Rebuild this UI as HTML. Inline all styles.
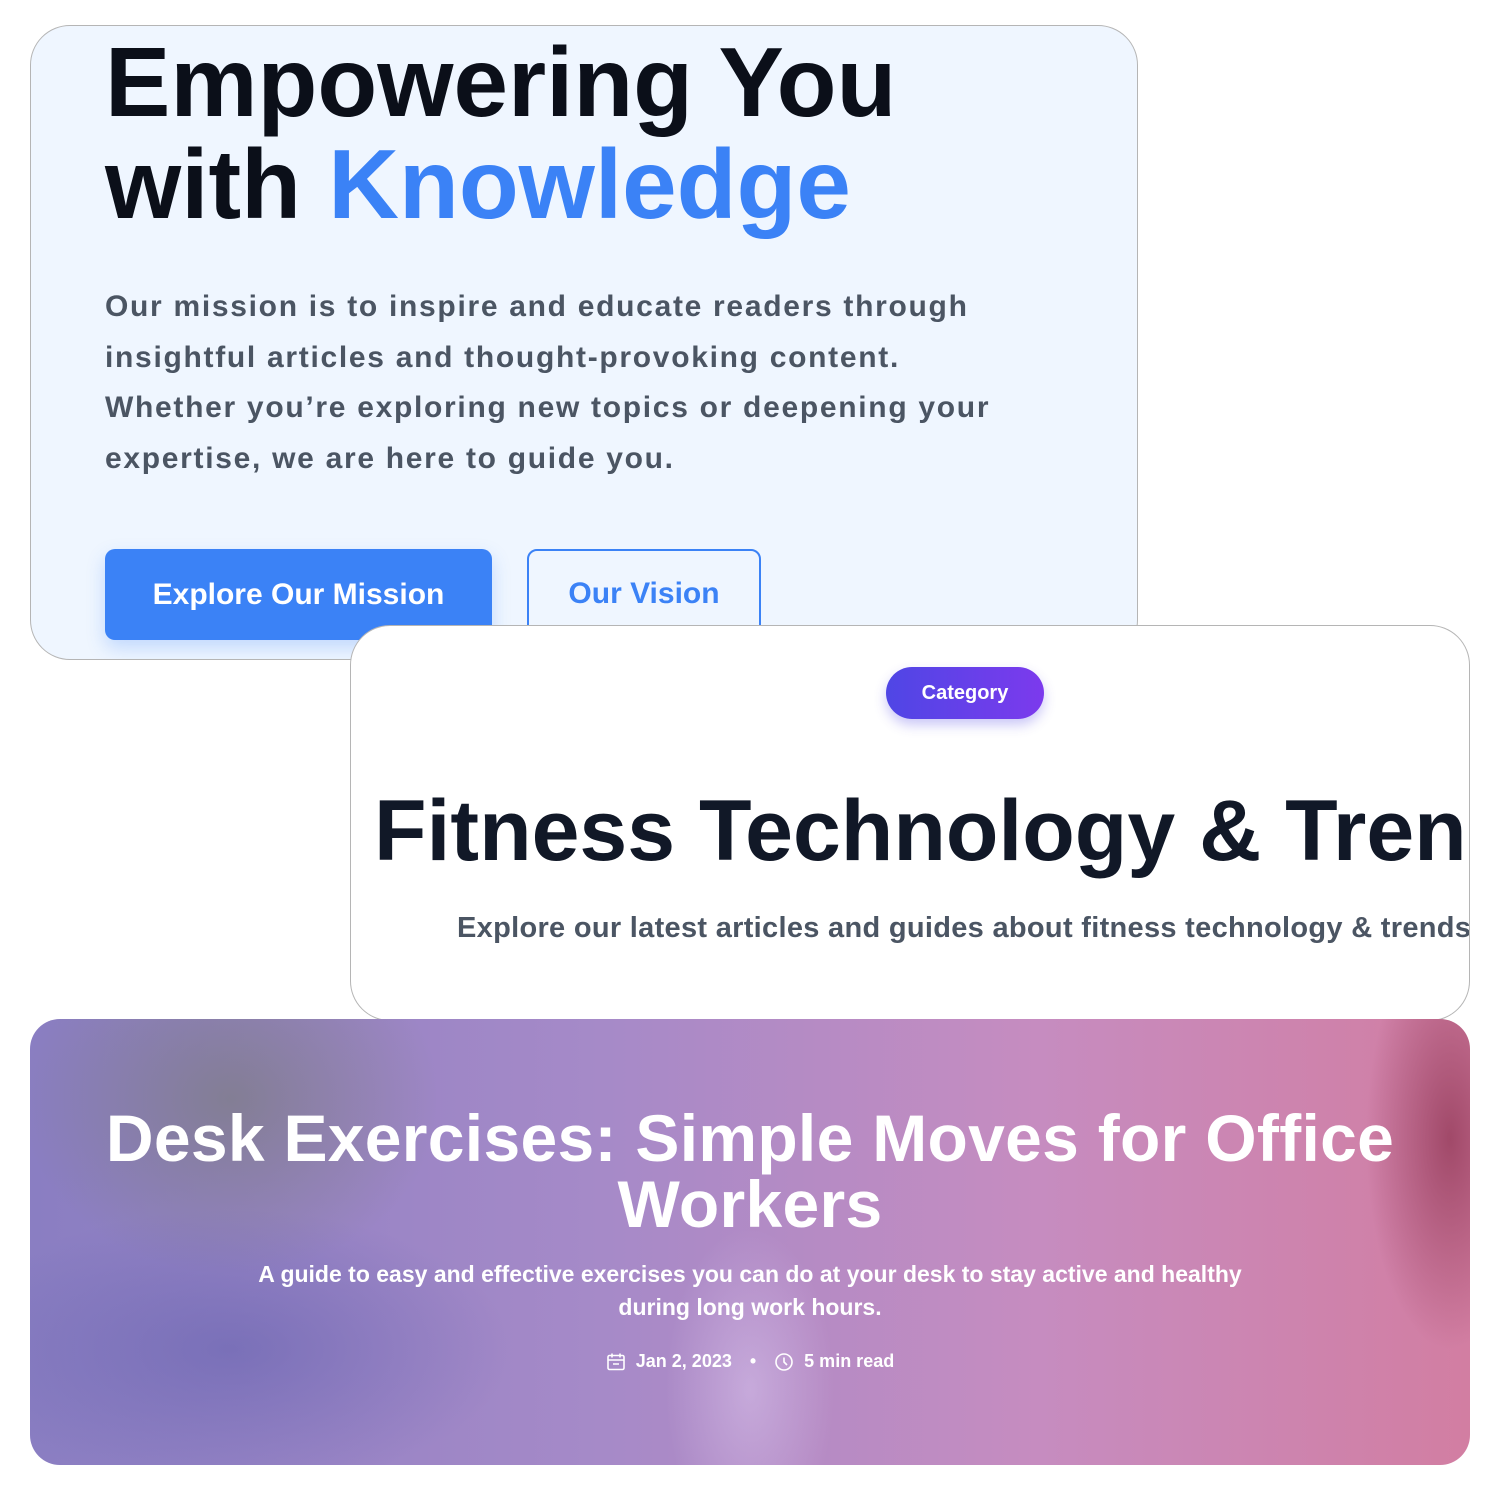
<!DOCTYPE html>
<html><head><meta charset="utf-8"><style>
*{margin:0;padding:0;box-sizing:border-box}
body{width:1500px;height:1500px;background:#fff;position:relative;overflow:hidden;font-family:"Liberation Sans",sans-serif}
.c1{position:absolute;left:30px;top:25px;width:1108px;height:635px;background:#eff6ff;border:1.5px solid #b5b5b5;border-radius:40px;overflow:hidden}
.h1{position:absolute;left:74px;top:5px;font-size:98px;font-weight:700;line-height:102px;color:#0b0f19;letter-spacing:0}
.h1 span{color:#3b82f6}
.p1{position:absolute;left:74px;top:256px;width:1000px;font-size:30px;font-weight:700;line-height:50.5px;color:#4b5563;white-space:nowrap;letter-spacing:1.7px}
.b1{position:absolute;left:74px;top:523px;width:387px;height:91px;background:#3b82f6;border-radius:10px;color:#fff;font-size:30px;font-weight:700;text-align:center;line-height:91px;box-shadow:0 8px 18px rgba(59,130,246,.25)}
.b2{position:absolute;left:496px;top:523px;width:234px;height:91px;border:2.5px solid #3b82f6;border-radius:10px;color:#3b82f6;font-size:30px;font-weight:700;text-align:center;line-height:86px}
.c2{position:absolute;left:350px;top:625px;width:1120px;height:396px;background:#fff;border:1.5px solid #b5b5b5;border-radius:40px;overflow:hidden}
.pill{position:absolute;left:535px;top:41px;width:158px;height:52px;border-radius:26px;background:linear-gradient(90deg,#4f46e5,#7c3aed);color:#fff;font-size:20px;font-weight:700;text-align:center;line-height:52px;box-shadow:0 6px 12px rgba(79,70,229,.3)}
.h2{position:absolute;left:23px;top:150px;font-size:86px;font-weight:700;color:#111827;white-space:nowrap;line-height:110px}
.p2{position:absolute;left:106px;top:286px;font-size:29px;font-weight:700;color:#4b5563;white-space:nowrap;letter-spacing:.3px}
.c3{position:absolute;left:30px;top:1019px;width:1440px;height:446px;border-radius:30px;overflow:hidden;
background:
radial-gradient(ellipse 300px 250px at 200px 80px,rgba(110,120,90,.45),transparent 70%),
radial-gradient(ellipse 120px 300px at 1420px 120px,rgba(140,50,80,.7),transparent 70%),
radial-gradient(ellipse 400px 200px at 200px 330px,rgba(90,90,170,.45),transparent 70%),
radial-gradient(ellipse 120px 230px at 720px 370px,rgba(220,200,240,.5),transparent 70%),
linear-gradient(90deg,#8a7ec2 0%,#a68ac8 40%,#c68cc0 70%,#d27ea2 100%)}
.h3{position:absolute;left:0;width:1440px;top:86px;text-align:center;color:#fff;font-size:66px;font-weight:700;line-height:66px;letter-spacing:.3px}
.p3{position:absolute;left:100px;width:1240px;top:239px;text-align:center;color:#fff;font-size:23px;font-weight:700;line-height:33px}
.meta{position:absolute;left:0;width:1440px;top:332px;text-align:center;color:#fff;font-size:18px;font-weight:700;display:flex;justify-content:center;align-items:center;gap:10px}
</style></head><body>
<div class="c1">
<div class="h1">Empowering You<br>with <span>Knowledge</span></div>
<div class="p1">Our mission is to inspire and educate readers through<br>insightful articles and thought-provoking content.<br>Whether you’re exploring new topics or deepening your<br>expertise, we are here to guide you.</div>
<div class="b1">Explore Our Mission</div>
<div class="b2">Our Vision</div>
</div>
<div class="c2">
<div class="pill">Category</div>
<div class="h2">Fitness Technology &amp; Trends</div>
<div class="p2">Explore our latest articles and guides about fitness technology &amp; trends.</div>
</div>
<div class="c3">
<div class="h3">Desk Exercises: Simple Moves for Office<br>Workers</div>
<div class="p3">A guide to easy and effective exercises you can do at your desk to stay active and healthy<br>during long work hours.</div>
<div class="meta">
<svg width="20" height="20" viewBox="0 0 20 20" fill="none" stroke="#fff" stroke-width="1.6"><rect x="2" y="3.5" width="16" height="14" rx="1.5"/><path d="M6 1.5v4M14 1.5v4M2 8h16M7 12h6"/></svg>
<span>Jan 2, 2023</span><span style="margin:0 8px">•</span>
<svg width="20" height="20" viewBox="0 0 20 20" fill="none" stroke="#fff" stroke-width="1.6"><circle cx="10" cy="10" r="8"/><path d="M10 5.5V10l3 3"/></svg>
<span>5 min read</span>
</div>
</div>
</body></html>
